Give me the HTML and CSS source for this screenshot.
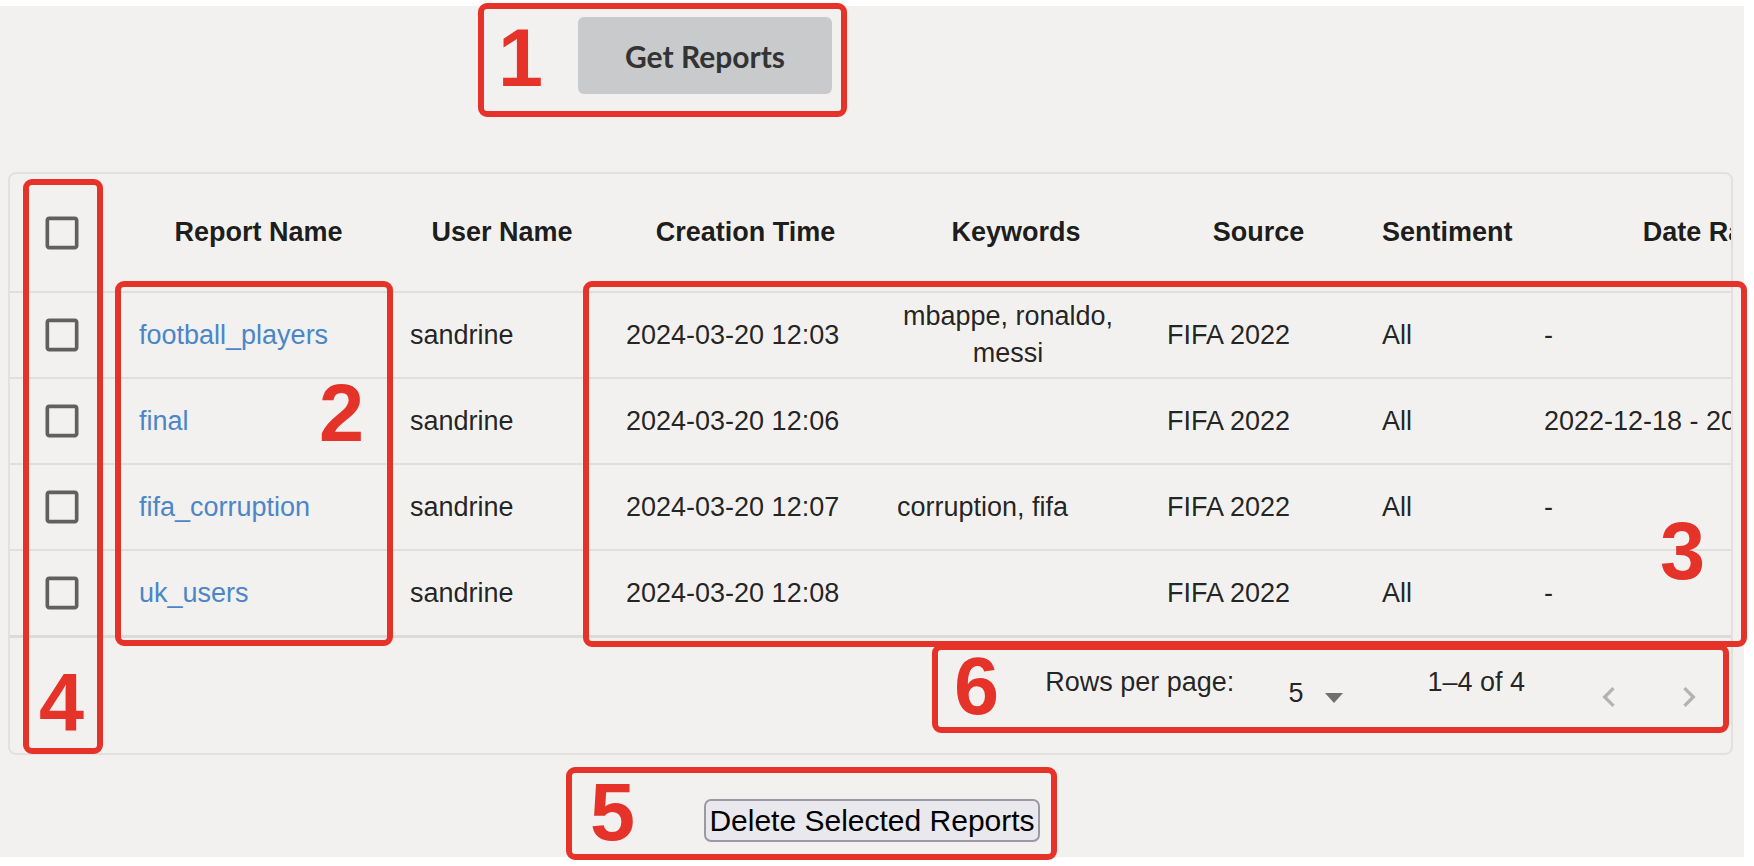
FILE: index.html
```html
<!DOCTYPE html>
<html lang="en">
<head>
<meta charset="utf-8">
<title>Reports</title>
<link rel="stylesheet" href="styles.css">
</head>
<body>
<div class="page">
  <button class="get-btn" type="button">Get Reports</button>

  <div class="card">
    <table class="reports">
      <colgroup>
        <col class="c-check"><col class="c-name"><col class="c-user"><col class="c-time"><col class="c-kw"><col class="c-src"><col class="c-sent"><col class="c-range">
      </colgroup>
      <thead>
        <tr>
          <th class="check-cell"><svg class="cb" viewBox="0 0 24 24"><path d="M19 5v14H5V5h14m0-2H5c-1.1 0-2 .9-2 2v14c0 1.1.9 2 2 2h14c1.1 0 2-.9 2-2V5c0-1.1-.9-2-2-2z"/></svg></th>
          <th>Report Name</th>
          <th>User Name</th>
          <th>Creation Time</th>
          <th>Keywords</th>
          <th>Source</th>
          <th>Sentiment</th>
          <th>Date Range</th>
        </tr>
      </thead>
      <tbody>
        <tr>
          <td class="check-cell"><svg class="cb" viewBox="0 0 24 24"><path d="M19 5v14H5V5h14m0-2H5c-1.1 0-2 .9-2 2v14c0 1.1.9 2 2 2h14c1.1 0 2-.9 2-2V5c0-1.1-.9-2-2-2z"/></svg></td>
          <td><a class="link" href="#">football_players</a></td>
          <td>sandrine</td>
          <td>2024-03-20 12:03</td>
          <td class="kw-center">mbappe, ronaldo, messi</td>
          <td>FIFA 2022</td>
          <td>All</td>
          <td>-</td>
        </tr>
        <tr>
          <td class="check-cell"><svg class="cb" viewBox="0 0 24 24"><path d="M19 5v14H5V5h14m0-2H5c-1.1 0-2 .9-2 2v14c0 1.1.9 2 2 2h14c1.1 0 2-.9 2-2V5c0-1.1-.9-2-2-2z"/></svg></td>
          <td><a class="link" href="#">final</a></td>
          <td>sandrine</td>
          <td>2024-03-20 12:06</td>
          <td></td>
          <td>FIFA 2022</td>
          <td>All</td>
          <td>2022-12-18 - 2022-12-18</td>
        </tr>
        <tr>
          <td class="check-cell"><svg class="cb" viewBox="0 0 24 24"><path d="M19 5v14H5V5h14m0-2H5c-1.1 0-2 .9-2 2v14c0 1.1.9 2 2 2h14c1.1 0 2-.9 2-2V5c0-1.1-.9-2-2-2z"/></svg></td>
          <td><a class="link" href="#">fifa_corruption</a></td>
          <td>sandrine</td>
          <td>2024-03-20 12:07</td>
          <td>corruption, fifa</td>
          <td>FIFA 2022</td>
          <td>All</td>
          <td>-</td>
        </tr>
        <tr class="last">
          <td class="check-cell"><svg class="cb" viewBox="0 0 24 24"><path d="M19 5v14H5V5h14m0-2H5c-1.1 0-2 .9-2 2v14c0 1.1.9 2 2 2h14c1.1 0 2-.9 2-2V5c0-1.1-.9-2-2-2z"/></svg></td>
          <td><a class="link" href="#">uk_users</a></td>
          <td>sandrine</td>
          <td>2024-03-20 12:08</td>
          <td></td>
          <td>FIFA 2022</td>
          <td>All</td>
          <td>-</td>
        </tr>
      </tbody>
    </table>

    <div class="pager">
      <span class="pager-label">Rows per page:</span>
      <span class="pager-select"><span class="pager-value">5</span><svg class="caret" viewBox="0 0 18 10"><polygon points="0,0 18,0 9,10"/></svg></span>
      <span class="pager-count">1–4 of 4</span>
      <svg class="chev" viewBox="0 0 24 24"><path d="M15.41 16.59 10.83 12l4.58-4.59L14 6l-6 6 6 6 1.41-1.41z"/></svg>
      <svg class="chev chev-next" viewBox="0 0 24 24"><path d="M8.59 16.59 13.17 12 8.59 7.41 10 6l6 6-6 6-1.41-1.41z"/></svg>
    </div>
  </div>

  <button class="del-btn" type="button">Delete Selected Reports</button>
</div>

<div class="annotations">
  <div class="box box-1"></div>
  <div class="box box-2"></div>
  <div class="box box-3"></div>
  <div class="box box-4"></div>
  <div class="box box-5"></div>
  <div class="box box-6"></div>
  <span class="num num-1">1</span>
  <span class="num num-2">2</span>
  <span class="num num-3">3</span>
  <span class="num num-4">4</span>
  <span class="num num-5">5</span>
  <span class="num num-6">6</span>
</div>
</body>
</html>
```

FILE: styles.css
```css
html, body {
  margin: 0;
  padding: 0;
  background: #ffffff;
}

body {
  width: 1754px;
  height: 866px;
  overflow: hidden;
  font-family: "Liberation Sans", Arial, sans-serif;
  color: rgba(0, 0, 0, 0.87);
}

.page {
  width: 1744px;
  height: 851px;
  margin-top: 6px;
  background: #f2f1ef;
  padding-top: 11px;
  box-sizing: border-box;
  display: flex;
  flex-direction: column;
  align-items: flex-start;
}

.get-btn {
  margin-left: 578px;
  width: 254px;
  height: 77px;
  border: none;
  border-radius: 6px;
  background: #c9cacc;
  color: #333333;
  font-family: Lato, "Liberation Sans", sans-serif;
  font-weight: 700;
  font-size: 30px;
  padding: 0;
}

.card {
  margin-top: 78px;
  margin-left: 8px;
  width: 1725px;
  height: 583px;
  box-sizing: border-box;
  border: 2px solid #e2e1df;
  border-radius: 8px;
  overflow: hidden;
}

.reports {
  table-layout: fixed;
  width: 1896px;
  border-collapse: separate;
  border-spacing: 0;
  font-size: 27px;
  line-height: 37px;
}

.c-check { width: 113px; }
.c-name { width: 271px; }
.c-user { width: 216px; }
.c-time { width: 271px; }
.c-kw { width: 270px; }
.c-src { width: 215px; }
.c-sent { width: 162px; }
.c-range { width: 378px; }

.reports th,
.reports td {
  box-sizing: border-box;
  padding: 0 16px;
  vertical-align: middle;
  border-bottom: 2px solid #e0dfdd;
}

.reports th {
  height: 119px;
  font-weight: 700;
  text-align: center;
  white-space: nowrap;
  color: rgba(0, 0, 0, 0.9);
}

.reports td {
  height: 86px;
  text-align: left;
  white-space: nowrap;
}

.reports tr.last td {
  height: 87px;
  border-bottom: 3px solid #dcdbd9;
}

.reports .check-cell {
  padding: 0 0 0 30px;
  text-align: left;
}

.cb {
  display: block;
  width: 44px;
  height: 44px;
  fill: rgba(0, 0, 0, 0.6);
}

.reports td.kw-center {
  text-align: center;
  white-space: normal;
  padding-right: 32px;
}

.link {
  color: #4a86c8;
  text-decoration: none;
}

.pager {
  height: 115px;
  display: flex;
  justify-content: flex-end;
  align-items: flex-start;
  padding-right: 22px;
  font-size: 27px;
  line-height: 37px;
}

.pager-label {
  margin-top: 26px;
  margin-right: 54px;
}

.pager-select {
  display: flex;
  align-items: flex-start;
  margin-top: 37px;
  margin-right: 84px;
}

.caret {
  width: 18px;
  height: 10px;
  margin-left: 22px;
  margin-top: 18px;
  fill: rgba(0, 0, 0, 0.54);
}

.pager-count {
  margin-top: 26px;
  margin-right: 64px;
}

.chev {
  width: 40px;
  height: 40px;
  margin-top: 39px;
  fill: rgba(0, 0, 0, 0.26);
}

.chev-next {
  margin-left: 40px;
}

.del-btn {
  align-self: center;
  margin-top: 44px;
  height: 43px;
  padding: 0 3px;
  border: 2px solid #9a9aa4;
  border-radius: 7px;
  background: #e9e9ed;
  color: #000000;
  font-family: "Liberation Sans", Arial, sans-serif;
  font-size: 30px;
  line-height: 37px;
}

/* annotation overlay */
.annotations {
  position: absolute;
  left: 0;
  top: 0;
  width: 1754px;
  height: 866px;
  pointer-events: none;
}

.box {
  position: absolute;
  box-sizing: border-box;
  border: 6px solid #e6332a;
  border-radius: 9px;
}

.box-1 { left: 478px; top: 3px; width: 369px; height: 114px; }
.box-2 { left: 115px; top: 281px; width: 278px; height: 365px; }
.box-3 { left: 583px; top: 281px; width: 1164px; height: 366px; }
.box-4 { left: 23px; top: 179px; width: 80px; height: 575px; }
.box-5 { left: 566px; top: 767px; width: 491px; height: 93px; }
.box-6 { left: 932px; top: 644px; width: 797px; height: 89px; }

.num {
  position: absolute;
  font-family: "Liberation Sans", Arial, sans-serif;
  font-weight: 700;
  font-size: 81px;
  line-height: 81px;
  color: #e6332a;
}

.num-1 { left: 498px; top: 18px; }
.num-2 { left: 319px; top: 373px; }
.num-3 { left: 1660px; top: 511px; }
.num-4 { left: 39px; top: 662px; }
.num-5 { left: 590px; top: 772px; }
.num-6 { left: 954px; top: 646px; }
```
